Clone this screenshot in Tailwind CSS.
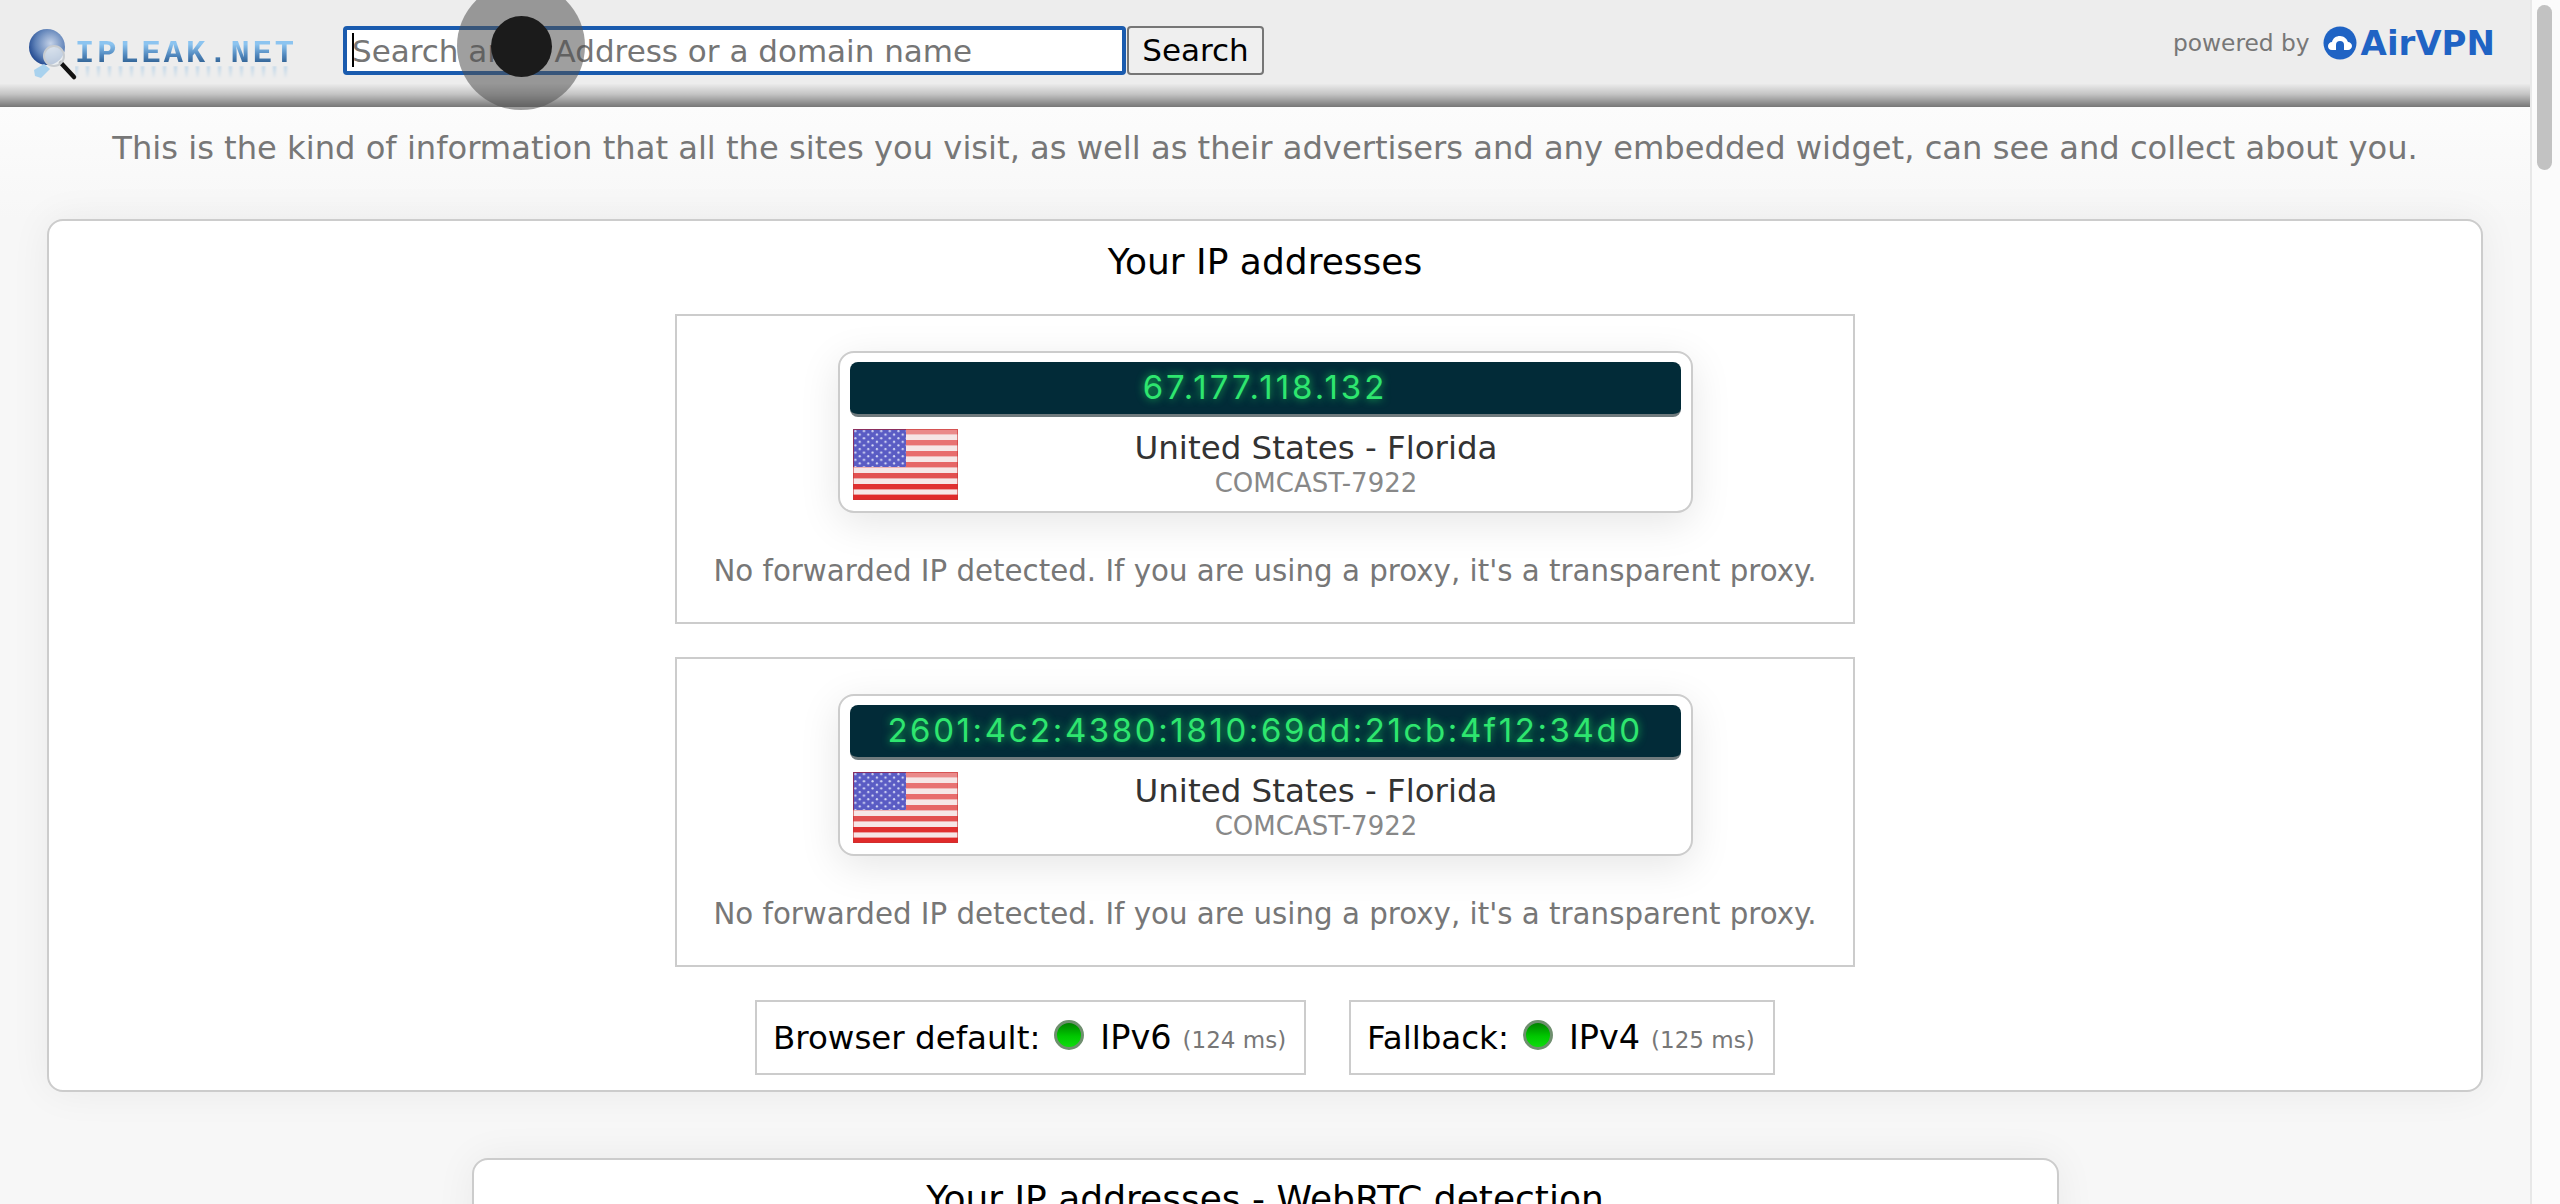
<!DOCTYPE html>
<html lang="en">
<head>
    <meta charset="UTF-8">
    <meta name="viewport" content="width=device-width, initial-scale=1.0">
    <title>IP/DNS Detect - What is your IP, what is your DNS, what informations you send to websites</title>
    <script src="https://cdn.jsdelivr.net/npm/@tailwindcss/browser@4"></script>
</head>
<body class="h-[1204px] w-[2560px] overflow-hidden bg-[#f7f7f7] font-['DejaVu_Sans',sans-serif]">
    <!-- shared flag and LED drawings -->
    <svg class="absolute w-0 h-0">
        <defs>
            <linearGradient id="led" x1="0" y1="0" x2="0" y2="1">
                <stop offset="0" stop-color="#007a00"/>
                <stop offset="0.55" stop-color="#00c800"/>
                <stop offset="1" stop-color="#10e010"/>
            </linearGradient>
            <pattern id="stars" width="8.6" height="7.2" patternUnits="userSpaceOnUse">
                <circle cx="2.4" cy="2" r="1.1" fill="#d8dcf6"/>
                <circle cx="6.7" cy="5.6" r="1.1" fill="#d8dcf6"/>
            </pattern>
            <symbol id="flag" viewBox="0 0 105 71">
                <rect width="105" height="71" fill="#f6e6e6"/>
                <rect y="0" width="105" height="5.4" fill="#ea8a8a"/>
                <rect y="11" width="105" height="5.4" fill="#e87272"/>
                <rect y="22" width="105" height="5.4" fill="#e86c6c"/>
                <rect y="33" width="105" height="5.4" fill="#e66666"/>
                <rect y="44" width="105" height="5.4" fill="#e25050"/>
                <rect y="55" width="105" height="5.4" fill="#e03030"/>
                <rect y="65.6" width="105" height="5.4" fill="#e02a2a"/>
                <rect width="53" height="38" fill="#5a5cc4"/>
                <rect width="53" height="38" fill="url(#stars)"/>
                <path d="M0.5 38V0.5H53" fill="none" stroke="#2f2fa8" stroke-width="1"/>
                <rect x="0.5" y="0.5" width="104" height="70" fill="none" stroke="#c83030" stroke-opacity="0.6"/>
            </symbol>
        </defs>
    </svg>

    <div class="flex h-full">
        <div class="w-[2530px] shrink-0 h-full overflow-hidden">
            <header class="flex items-start h-[107px] bg-[linear-gradient(to_bottom,#ededed_0%,#ededed_78%,#c4c4c4_88%,#777777_100%)]">
                <!-- logo -->
                <div class="relative w-[343px] h-[107px] shrink-0">
                    <svg class="absolute left-[26px] top-[26px]" width="56" height="56" viewBox="0 0 56 56">
                        <defs>
                            <radialGradient id="globe" cx="0.6" cy="0.4" r="0.7">
                                <stop offset="0" stop-color="#c4d2e8"/>
                                <stop offset="0.6" stop-color="#5f82b8"/>
                                <stop offset="1" stop-color="#123a86"/>
                            </radialGradient>
                        </defs>
                        <circle cx="21" cy="21" r="18" fill="url(#globe)"/>
                        <path d="M8 44l10-6 6 5-9 9-6-2z" fill="#a9d2ee"/>
                        <path d="M35 37l13 14" stroke="#111111" stroke-width="4.5" stroke-linecap="round"/>
                        <circle cx="28" cy="30" r="10" fill="#e8edf2" fill-opacity="0.75" stroke="#c8ccd0" stroke-width="2"/>
                    </svg>
                    <div class="absolute left-[75px] top-[40px] w-[222px] text-[32px] leading-[28px] font-bold tracking-[3px] font-['Liberation_Mono',monospace] whitespace-nowrap bg-[linear-gradient(to_bottom,#8cc4f0_15%,#4f86bc_55%,#2f5f90_85%)] bg-clip-text text-transparent">IPLEAK.NET</div>
                    <div class="absolute left-[75px] top-[66px] w-[220px] h-[13px] blur-[1px] opacity-60 bg-[repeating-linear-gradient(to_right,#9cc4e4_0px,#9cc4e4_3px,transparent_3px,transparent_11px)] [mask-image:linear-gradient(to_bottom,black,transparent)]"></div>
                </div>

                <!-- search -->
                <div class="relative mt-[26px] w-[783px] h-[49px] shrink-0 rounded-[4px] border-[4px] border-[#1a5bae] bg-white">
                    <input type="text" placeholder="Search an IP Address or a domain name" class="w-full h-full pl-[5px] text-[31px] leading-[41px] outline-none placeholder:text-[#757575]">
                    <span class="absolute left-[5px] top-[3px] h-[34px] w-[2px] bg-black"></span>
                </div>
                <button class="mt-[26px] ml-[1px] w-[137px] h-[49px] shrink-0 rounded-[4px] border-[2px] border-[#767676] bg-[#efefef] text-[31px] leading-none text-black">Search</button>

                <div class="ml-auto mr-[35px] mt-[26px] flex items-center h-[34px]">
                    <span class="text-[23.3px] text-[#777777]">powered by</span>
                    <svg class="ml-[13px]" width="34" height="34" viewBox="0 0 34 34">
                        <circle cx="17" cy="17" r="16.5" fill="#1f63c4"/>
                        <path d="M9 24c-3 0-4-2-4-4s2-4 4-4c1-4 4-6 8-6s7 3 8 6c2 0 4 2 4 4s-2 4-4 4z" fill="#ffffff"/>
                        <path d="M13 24v-5a4 4 0 0 1 8 0v5z" fill="#1f63c4"/>
                    </svg>
                    <span class="ml-[4px] text-[34px] leading-none font-bold text-[#1f63c4]">AirVPN</span>
                </div>
            </header>

            <main>
                <p class="h-[112px] pt-[20px] text-center text-[32.16px] leading-[42px] text-[#777777] bg-[linear-gradient(to_bottom,#fcfcfc,#f7f7f7)]">This is the kind of information that all the sites you visit, as well as their advertisers and any embedded widget, can see and collect about you.</p>

                <section class="mx-[47px] h-[873px] rounded-[16px] border-[2px] border-[#cccccc] bg-white shadow-[0_0_40px_rgba(0,0,0,0.06)] flex flex-col items-center">
                    <h2 class="mt-[20px] h-[42px] text-[36px] leading-[42px] text-black">Your IP addresses</h2>

                    <div class="mt-[31px] w-[1180px] h-[310px] border-[2px] border-[#cccccc] flex flex-col items-center">
                        <div class="mt-[35px] w-[855px] h-[162px] rounded-[16px] border-[2px] border-[#cccccc] bg-white shadow-[0_10px_40px_rgba(0,0,0,0.1)] px-[10px] pt-[9px]">
                            <div class="flex items-center justify-center h-[55px] rounded-[8px] border-b-[3px] border-[#6f7a7d] bg-[#022b38] text-[33px] tracking-[3px] font-['Inter',sans-serif] font-normal text-[#2ee66f] [text-shadow:0_0_8px_#19c257]">67.177.118.132</div>
                            <div class="flex mt-[12px]">
                                <svg class="ml-[3px] shrink-0 blur-[0.4px]" width="105" height="71"><use href="#flag"/></svg>
                                <div class="flex-1 text-center pr-[6px]">
                                    <div class="h-[39px] text-[32.5px] leading-[38px] text-[#333333]">United States - Florida</div>
                                    <div class="h-[30px] text-[26px] leading-[30px] text-[#888888]">COMCAST-7922</div>
                                </div>
                            </div>
                        </div>
                        <p class="mt-[40px] text-[29.3px] leading-[36px] text-[#777777]">No forwarded IP detected. If you are using a proxy, it's a transparent proxy.</p>
                    </div>

                    <div class="mt-[33px] w-[1180px] h-[310px] border-[2px] border-[#cccccc] flex flex-col items-center">
                        <div class="mt-[35px] w-[855px] h-[162px] rounded-[16px] border-[2px] border-[#cccccc] bg-white shadow-[0_10px_40px_rgba(0,0,0,0.1)] px-[10px] pt-[9px]">
                            <div class="flex items-center justify-center h-[55px] rounded-[8px] border-b-[3px] border-[#6f7a7d] bg-[#022b38] text-[33px] tracking-[2.6px] font-['Inter',sans-serif] font-normal text-[#2ee66f] [text-shadow:0_0_8px_#19c257]">2601:4c2:4380:1810:69dd:21cb:4f12:34d0</div>
                            <div class="flex mt-[12px]">
                                <svg class="ml-[3px] shrink-0 blur-[0.4px]" width="105" height="71"><use href="#flag"/></svg>
                                <div class="flex-1 text-center pr-[6px]">
                                    <div class="h-[39px] text-[32.5px] leading-[38px] text-[#333333]">United States - Florida</div>
                                    <div class="h-[30px] text-[26px] leading-[30px] text-[#888888]">COMCAST-7922</div>
                                </div>
                            </div>
                        </div>
                        <p class="mt-[40px] text-[29.3px] leading-[36px] text-[#777777]">No forwarded IP detected. If you are using a proxy, it's a transparent proxy.</p>
                    </div>

                    <div class="mt-[33px] flex gap-[43px]">
                        <div class="flex items-center h-[75px] w-[551px] border-[2px] border-[#cccccc] pl-[16px] pt-[2px] text-[32.5px] text-black whitespace-nowrap">
                            <span>Browser default:</span>
                            <svg class="ml-[14px] mr-[16px] -mt-[8px]" width="30" height="30" viewBox="0 0 30 30"><circle cx="15" cy="15" r="13.5" fill="url(#led)" stroke="#6f8f6f" stroke-width="3"/></svg>
                            <span class="text-[33.5px]">IPv6</span>
                            <span class="ml-[11px] mt-[4px] text-[23px] text-[#777777]">(124 ms)</span>
                        </div>
                        <div class="flex items-center h-[75px] w-[426px] border-[2px] border-[#cccccc] pl-[16px] pt-[2px] text-[32.5px] text-black whitespace-nowrap">
                            <span>Fallback:</span>
                            <svg class="ml-[14px] mr-[16px] -mt-[8px]" width="30" height="30" viewBox="0 0 30 30"><circle cx="15" cy="15" r="13.5" fill="url(#led)" stroke="#6f8f6f" stroke-width="3"/></svg>
                            <span class="text-[33.5px]">IPv4</span>
                            <span class="ml-[11px] mt-[4px] text-[23px] text-[#777777]">(125 ms)</span>
                        </div>
                    </div>
                </section>

                <section class="mt-[66px] mx-auto w-[1587px] h-[300px] rounded-t-[16px] border-[2px] border-[#cccccc] bg-white shadow-[0_0_40px_rgba(0,0,0,0.06)] text-center">
                    <h2 class="mt-[18px] text-[36px] leading-[42px] text-black">Your IP addresses - WebRTC detection</h2>
                </section>
            </main>
        </div>

        <!-- scrollbar -->
        <aside class="w-[30px] h-full border-l-[2px] border-[#e8e8e8] bg-[#fbfbfb] pl-[5px] pt-[5px]">
            <div class="w-[15px] h-[165px] rounded-full bg-[#c2c2c2]"></div>
        </aside>
    </div>

    <!-- touch indicator -->
    <div class="absolute left-[457px] top-[-18px] w-[128px] h-[128px] rounded-full bg-[#505050]/55 flex items-center justify-center">
        <div class="w-[61px] h-[61px] rounded-full bg-[#1b1b1b]"></div>
    </div>
</body>
</html>
